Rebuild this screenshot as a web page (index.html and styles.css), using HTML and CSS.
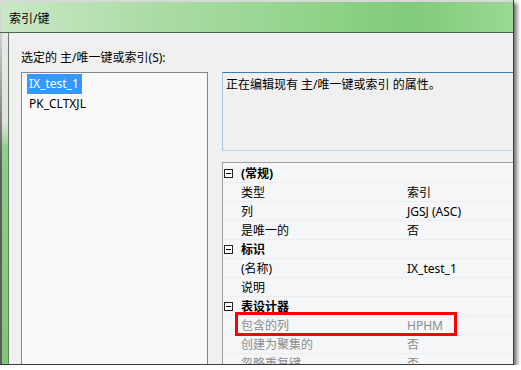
FILE: index.html
```html
<!DOCTYPE html>
<html lang="zh-CN">
<head>
    <meta charset="UTF-8">
    <title>索引/键</title>
    <link rel="stylesheet" href="styles.css">
</head>
<body>
<div class="shot">
    <div class="titlebar">索引/键</div>
    <div class="frame">
        <div class="frame-left"></div>
        <div class="client">
            <div class="label">选定的 主/唯一键或索引(S):</div>
            <div class="panes">
                <!--键列表-->
                <ul class="keylist">
                    <li class="selected"><span>IX_test_1</span></li>
                    <li><span>PK_CLTXJL</span></li>
                </ul>
                <div class="details">
                    <div class="desc">正在编辑现有 主/唯一键或索引 的属性。</div>
                    <!--属性表-->
                    <div class="grid">
                        <div class="row cat">
                            <span class="toggle"><svg width="9" height="9" viewBox="0 0 9 9"><rect x="0.5" y="0.5" width="8" height="8" fill="#fff" stroke="#222"/><path d="M2 4.5h5" stroke="#000"/></svg></span>
                            <span>(常规)</span><span></span>
                        </div>
                        <div class="row"><span></span><span>类型</span><span>索引</span></div>
                        <div class="row"><span></span><span>列</span><span>JGSJ (ASC)</span></div>
                        <div class="row"><span></span><span>是唯一的</span><span>否</span></div>
                        <div class="row cat">
                            <span class="toggle"><svg width="9" height="9" viewBox="0 0 9 9"><rect x="0.5" y="0.5" width="8" height="8" fill="#fff" stroke="#222"/><path d="M2 4.5h5" stroke="#000"/></svg></span>
                            <span>标识</span><span></span>
                        </div>
                        <div class="row"><span></span><span>(名称)</span><span>IX_test_1</span></div>
                        <div class="row"><span></span><span>说明</span><span></span></div>
                        <div class="row cat">
                            <span class="toggle"><svg width="9" height="9" viewBox="0 0 9 9"><rect x="0.5" y="0.5" width="8" height="8" fill="#fff" stroke="#222"/><path d="M2 4.5h5" stroke="#000"/></svg></span>
                            <span>表设计器</span><span></span>
                        </div>
                        <div class="row dim"><span></span><span>包含的列</span><span>HPHM</span></div>
                        <div class="row dim"><span></span><span>创建为聚集的</span><span>否</span></div>
                        <div class="row dim"><span></span><span>忽略重复键</span><span>否</span></div>
                        <div class="mark"></div>
                    </div>
                </div>
            </div>
        </div>
    </div>
</div>
</body>
</html>
```

FILE: styles.css
```css
* {
    margin: 0;
    padding: 0
}

ul {
    list-style: none
}

body {
    background-color: #fff;
    font-family: "Noto Sans", "Noto Sans CJK SC", sans-serif;
    font-size: 12px;
    color: #000;
}

.shot {
    width: 513px;
    height: 364px;
    border-right: 1px solid #3c3c3c;
    border-bottom: 1px solid #3c3c3c;
    box-shadow: 3px 3px 4px rgba(0, 0, 0, .55);
    overflow: hidden;
    display: flex;
    flex-direction: column;
}

.titlebar {
    height: 28px;
    padding-top: 4px;
    padding-left: 9px;
    display: flex;
    align-items: center;
    flex: none;
    border-bottom: 1px solid #4d644d;
    background: linear-gradient(to right, #cbe7c7 0%, #acdca6 30%, #92d48b 60%, #80cb79 80%, #9ad894 100%);
    box-shadow: inset 0 2px #d6dad6, inset 2px 0 #d6dad6;
}

.frame {
    flex: 1;
    display: flex;
    min-height: 0;
}

.frame-left {
    width: 8px;
    flex: none;
    background:
        linear-gradient(to bottom, #d0d0d0, #5c5c5c 130px) 0 0 / 2px 100% no-repeat,
        linear-gradient(to bottom, #e6e9e6 0, #dde5dc 90px, #8fcf88 115px, #7ec777 100%);
}

.client {
    flex: 1;
    min-width: 0;
    border-left: 1px solid #6d7a6d;
    background-color: #f0f0f0;
    padding-left: 12px;
    overflow: hidden;
}

.label {
    margin-top: 17px;
    line-height: 16px;
}

.panes {
    display: flex;
    margin-top: 6px;
    height: 320px;
}

.keylist {
    width: 187px;
    flex: none;
    box-sizing: border-box;
    border: 1px solid #828790;
    background-color: #f9f9f9;
    padding-top: 1px;
}

.keylist li {
    height: 20px;
    line-height: 20px;
    padding-left: 7px;
}

.keylist li span {
    display: inline-block;
}

.keylist li.selected span {
    background-color: #3399ff;
    color: #fff;
    padding: 0 3px 0 2px;
    margin-left: -2px;
}

.details {
    width: 320px;
    flex: none;
    margin-left: 14px;
}

.desc {
    height: 79px;
    box-sizing: border-box;
    border: 1px solid;
    border-color: #3d7bad #b5cfe7 #c0d9ee #a5c4e0;
    padding: 4px 3px;
    line-height: 16px;
}

.grid {
    position: relative;
    margin-top: 11px;
    height: 300px;
    padding-top: 1px;
    border: 1px solid #a0a0a0;
    background-color: #f4f6f7;
}

.row {
    display: grid;
    grid-template-columns: 18px 166px 1fr;
    height: 19px;
    box-sizing: border-box;
    line-height: 19px;
    border-bottom: 1px dotted #e3e5e7;
    white-space: nowrap;
}

.row.cat {
    font-weight: bold;
}

.row.dim {
    color: #8d8d8d;
}

.toggle {
    display: flex;
    align-items: center;
    padding-left: 1px;
}

.toggle svg {
    display: block;
}

.mark {
    position: absolute;
    left: 12px;
    top: 149px;
    width: 222px;
    height: 24px;
    box-sizing: border-box;
    border: 3px solid #f00;
}
```
